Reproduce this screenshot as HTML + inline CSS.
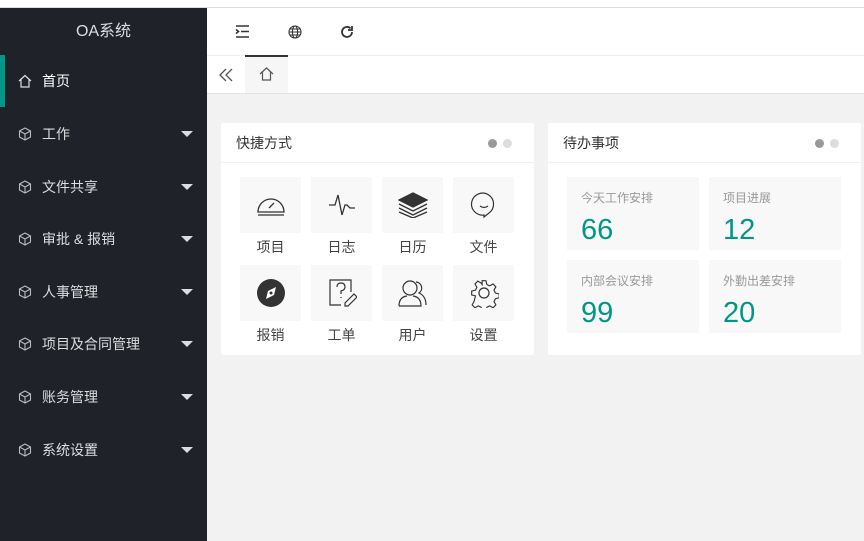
<!DOCTYPE html>
<html><head><meta charset="utf-8"><style>
*{margin:0;padding:0;box-sizing:border-box}
body{width:864px;height:541px;overflow:hidden;background:#f2f2f2;font-family:"Liberation Sans","Noto Sans CJK SC",sans-serif;position:relative}
.top{position:absolute;left:0;top:0;width:864px;height:8px;background:#fff;border-bottom:1px solid #ddd}
.side{position:absolute;left:0;top:8px;width:207px;height:533px;background:#20222a;color:#fff}
.logo{height:47px;line-height:47px;text-align:center;font-size:16px;color:#ddd}
.mi{position:absolute;left:0;width:207px;height:52px;font-size:14px;color:#ddd;display:flex;align-items:center}
.mi svg{position:absolute;left:18px}
.mi span{position:absolute;left:42px}
.mi.act{color:#fff}
.mi.act:before{content:"";position:absolute;left:0;top:0;width:5px;height:52px;background:#009688}
.arr{position:absolute;left:181px;width:0;height:0;border-left:6px solid transparent;border-right:6px solid transparent;border-top:6px solid #ddd}
.hdr{position:absolute;left:207px;top:8px;width:657px;height:47px;background:#fff}
.tabs{position:absolute;left:207px;top:55px;width:657px;height:39px;background:#fff;border-top:1px solid #eee;border-bottom:1px solid #e2e2e2}
.card{position:absolute;top:123px;width:313px;height:232px;background:#fff;border-radius:2px}
.ch{height:40px;border-bottom:1px solid #f0f0f0;line-height:40px;padding-left:15px;font-size:14px;color:#333;position:relative}
.dot{position:absolute;top:16px;width:9px;height:9px;border-radius:50%}
.sc{position:absolute;width:61px;height:56px;background:#f8f8f8;display:flex;align-items:center;justify-content:center}
.lb{position:absolute;width:61px;text-align:center;font-size:14px;color:#444}
.bx{position:absolute;width:132px;height:73px;background:#f8f8f8}
.bx p{position:absolute;left:14px;top:12px;font-size:12px;color:#999}
.bx b{position:absolute;left:14px;top:37px;font-size:29px;font-weight:normal;color:#009688;font-family:"Liberation Sans",sans-serif}
</style></head><body>
<div class="top"></div>
<div class="side">
<div class="logo">OA系统</div>
</div>
<div class="mi act" style="top:55px"><svg width="14" height="14" viewBox="0 0 14 14" fill="none" stroke="#ddd" stroke-width="1.2"><path d="M1 7L7 1.5 13 7M3 5.5V13h8V5.5"/></svg><span>首页</span></div>
<div class="mi" style="top:108px"><svg width="14" height="14" viewBox="0 0 14 14" fill="none" stroke="#bbb" stroke-width="1.1"><path d="M7 1l5.5 3v6L7 13 1.5 10V4z M1.5 4L7 7l5.5-3M7 7v6"/></svg><span>工作</span><i class="arr"></i></div>
<div class="mi" style="top:161px"><svg width="14" height="14" viewBox="0 0 14 14" fill="none" stroke="#bbb" stroke-width="1.1"><path d="M7 1l5.5 3v6L7 13 1.5 10V4z M1.5 4L7 7l5.5-3M7 7v6"/></svg><span>文件共享</span><i class="arr"></i></div>
<div class="mi" style="top:213px"><svg width="14" height="14" viewBox="0 0 14 14" fill="none" stroke="#bbb" stroke-width="1.1"><path d="M7 1l5.5 3v6L7 13 1.5 10V4z M1.5 4L7 7l5.5-3M7 7v6"/></svg><span>审批 &amp; 报销</span><i class="arr"></i></div>
<div class="mi" style="top:266px"><svg width="14" height="14" viewBox="0 0 14 14" fill="none" stroke="#bbb" stroke-width="1.1"><path d="M7 1l5.5 3v6L7 13 1.5 10V4z M1.5 4L7 7l5.5-3M7 7v6"/></svg><span>人事管理</span><i class="arr"></i></div>
<div class="mi" style="top:318px"><svg width="14" height="14" viewBox="0 0 14 14" fill="none" stroke="#bbb" stroke-width="1.1"><path d="M7 1l5.5 3v6L7 13 1.5 10V4z M1.5 4L7 7l5.5-3M7 7v6"/></svg><span>项目及合同管理</span><i class="arr"></i></div>
<div class="mi" style="top:371px"><svg width="14" height="14" viewBox="0 0 14 14" fill="none" stroke="#bbb" stroke-width="1.1"><path d="M7 1l5.5 3v6L7 13 1.5 10V4z M1.5 4L7 7l5.5-3M7 7v6"/></svg><span>账务管理</span><i class="arr"></i></div>
<div class="mi" style="top:424px"><svg width="14" height="14" viewBox="0 0 14 14" fill="none" stroke="#bbb" stroke-width="1.1"><path d="M7 1l5.5 3v6L7 13 1.5 10V4z M1.5 4L7 7l5.5-3M7 7v6"/></svg><span>系统设置</span><i class="arr"></i></div>

<div class="hdr">
<svg style="position:absolute;left:28px;top:17px" width="15" height="13" viewBox="0 0 15 13" fill="none" stroke="#333" stroke-width="1.6"><path d="M1 1h13M6 6.5h8M1 12h13M1 4.5l2.5 2-2.5 2"/></svg>
<svg style="position:absolute;left:81px;top:17px" width="14" height="14" viewBox="0 0 14 14" fill="none" stroke="#333" stroke-width="1.1"><circle cx="7" cy="7" r="6"/><ellipse cx="7" cy="7" rx="2.6" ry="6"/><path d="M1 7h12M2 4h10M2 10h10"/></svg>
<svg style="position:absolute;left:133px;top:17px" width="14" height="14" viewBox="0 0 14 14" fill="none" stroke="#333" stroke-width="1.8"><path d="M12 7a5 5 0 1 1-1.5-3.6"/><path d="M12 1v4H8" fill="none"/></svg>
</div>
<div class="tabs">
<svg style="position:absolute;left:12px;top:12px" width="14" height="14" viewBox="0 0 14 14" fill="none" stroke="#555" stroke-width="1.3"><path d="M7 1L1 7l6 6M13 1L7 7l6 6"/></svg>
<div style="position:absolute;left:38px;top:-1px;width:43px;height:38px;background:#f6f6f6;border-top:2px solid #333"></div>
<svg style="position:absolute;left:52px;top:11px" width="15" height="14" viewBox="0 0 15 14" fill="none" stroke="#555" stroke-width="1.2"><path d="M1 7L7.5 1 14 7M3.5 5V13h8V5"/></svg>
</div>

<div class="card" style="left:221px">
<div class="ch">快捷方式<i class="dot" style="left:267px;background:#999"></i><i class="dot" style="left:282px;background:#ddd"></i></div>
<div class="sc" style="left:19px;top:54px"><svg width="30" height="22" viewBox="0 0 30 22" fill="none" stroke="#333" stroke-width="1.3"><path d="M2 18A13 13 0 1 1 28 18Z"/><path d="M2 21h26M13 14l5-5"/></svg></div>
<div class="sc" style="left:90px;top:54px"><svg width="28" height="24" viewBox="0 0 28 24" fill="none" stroke="#333" stroke-width="1.3"><path d="M1 12h6l3-10 4 20 3-10h2l3 3h5"/></svg></div>
<div class="sc" style="left:161px;top:54px"><svg width="30" height="26" viewBox="0 0 30 26" stroke="#333" stroke-width="1.4" fill="none"><path d="M15 1L29 8 15 15 1 8z" fill="#333"/><path d="M1 12l14 7 14-7M1 16l14 7 14-7M1 20l14 6 14-6"/></svg></div>
<div class="sc" style="left:232px;top:54px"><svg width="28" height="28" viewBox="0 0 28 28" fill="none" stroke="#333" stroke-width="1.2"><path d="M14 24A11 11 0 1 1 19 22L14 26Z"/><path d="M10 15q4 3 8 0"/></svg></div>
<div class="lb" style="left:19px;top:114px">项目</div><div class="lb" style="left:90px;top:114px">日志</div><div class="lb" style="left:161px;top:114px">日历</div><div class="lb" style="left:232px;top:114px">文件</div>
<div class="sc" style="left:19px;top:142px"><svg width="30" height="30" viewBox="0 0 30 30"><circle cx="15" cy="15" r="14" fill="#333"/><path d="M20 9l-8 4-2 8 8-4z" fill="#fff"/><circle cx="15" cy="15" r="1.5" fill="#333"/></svg></div>
<div class="sc" style="left:90px;top:142px"><svg width="30" height="30" viewBox="0 0 30 30" fill="none" stroke="#333" stroke-width="1.2"><path d="M14 27H3V2h21v12"/><path d="M10 9q0-4 4-4t4 4q0 3-4 4v3M14 19v1"/><path d="M27 16l3 3-9 9h-3v-3z"/></svg></div>
<div class="sc" style="left:161px;top:142px"><svg width="30" height="28" viewBox="0 0 30 28" fill="none" stroke="#333" stroke-width="1.2"><circle cx="12" cy="9" r="7"/><path d="M1 27q0-9 8-10M15 17q8 1 8 10H1"/><path d="M18 3a6 6 0 0 1 3 11q7 3 7 12"/></svg></div>
<div class="sc" style="left:232px;top:142px"><svg width="30" height="30" viewBox="0 0 30 30" fill="none" stroke="#333" stroke-width="1.2"><circle cx="15" cy="15" r="5"/><path d="M13 2h4l1 4 3 1.5 3.5-2 3 3-2 3.5 1.5 3 4 1v4l-4 1-1.5 3 2 3.5-3 3-3.5-2-3 1.5-1 4h-4l-1-4-3-1.5-3.5 2-3-3 2-3.5L6 18l-4-1v-4l4-1 1.5-3-2-3.5 3-3 3.5 2L13 6z" transform="scale(.95) translate(0.8,0.8)"/></svg></div>
<div class="lb" style="left:19px;top:202px">报销</div><div class="lb" style="left:90px;top:202px">工单</div><div class="lb" style="left:161px;top:202px">用户</div><div class="lb" style="left:232px;top:202px">设置</div>
</div>

<div class="card" style="left:548px">
<div class="ch">待办事项<i class="dot" style="left:267px;background:#999"></i><i class="dot" style="left:282px;background:#ddd"></i></div>
<div class="bx" style="left:19px;top:54px"><p>今天工作安排</p><b>66</b></div>
<div class="bx" style="left:161px;top:54px"><p>项目进展</p><b>12</b></div>
<div class="bx" style="left:19px;top:137px"><p>内部会议安排</p><b>99</b></div>
<div class="bx" style="left:161px;top:137px"><p>外勤出差安排</p><b>20</b></div>
</div>
</body></html>
